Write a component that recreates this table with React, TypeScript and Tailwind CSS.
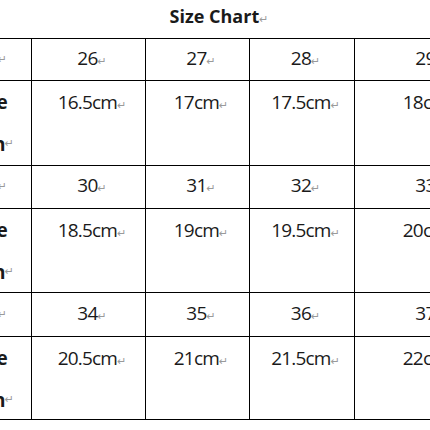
const rows = [
  { label: ['Size'], cells: ['26', '27', '28', '29'], h: 'h-[42px]' },
  { label: ['Insole', 'Length in'], cells: ['16.5cm', '17cm', '17.5cm', '18cm'], h: 'h-[85px]' },
  { label: ['Size'], cells: ['30', '31', '32', '33'], h: 'h-[43px]' },
  { label: ['Insole', 'Length in'], cells: ['18.5cm', '19cm', '19.5cm', '20cm'], h: 'h-[84px]' },
  { label: ['Size'], cells: ['34', '35', '36', '37'], h: 'h-[44px]' },
  { label: ['Insole', 'Length in'], cells: ['20.5cm', '21cm', '21.5cm', '22cm'], h: 'h-[83px]' },
];

const widths = ['w-[114px]', 'w-[104px]', 'w-[105px]', 'w-[144px]'];

const Mark = () => (
  <span className="text-[11px] text-[#9a9a9a] font-normal tracking-normal font-['DejaVu_Sans',sans-serif]">↵</span>
);

export default function App() {
  return (
    <div className="w-[430px] h-[430px] overflow-hidden bg-white text-[#1a1a1a] font-['Open_Sans',sans-serif]">
      <div className="h-[38px] pt-[4px] pl-[8px] flex justify-center">
        <span className="text-[18px] leading-[24px] font-bold">
          Size Chart<Mark />
        </span>
      </div>
      <div className="border-t border-black">
        {rows.map((row, i) => {
          const isData = row.label.length > 1;
          return (
            <div key={i} className={`flex border-b border-black ${row.h}`}>
              <div className="w-[32px] shrink-0 border-r border-black font-bold text-[19px] leading-[42px] tracking-[-0.8px]">
                {isData ? (
                  <>
                    <div className="flex justify-end whitespace-nowrap pr-[24px]">{row.label[0]}</div>
                    <div className="flex justify-end whitespace-nowrap pr-[17px]">
                      {row.label[1]}
                      <Mark />
                    </div>
                  </>
                ) : (
                  <div className="flex justify-end whitespace-nowrap pr-[24px] h-full items-center">
                    {row.label[0]}
                    <Mark />
                  </div>
                )}
              </div>
              {row.cells.map((c, j) => (
                <div
                  key={j}
                  className={`${widths[j]} shrink-0 border-r border-black flex justify-center pl-[7px] text-[19px] leading-[42px] tracking-[-0.8px] ${
                    isData ? 'items-start' : 'items-center'
                  }`}
                >
                  <span>
                    {c}
                    <Mark />
                  </span>
                </div>
              ))}
            </div>
          );
        })}
      </div>
    </div>
  );
}
